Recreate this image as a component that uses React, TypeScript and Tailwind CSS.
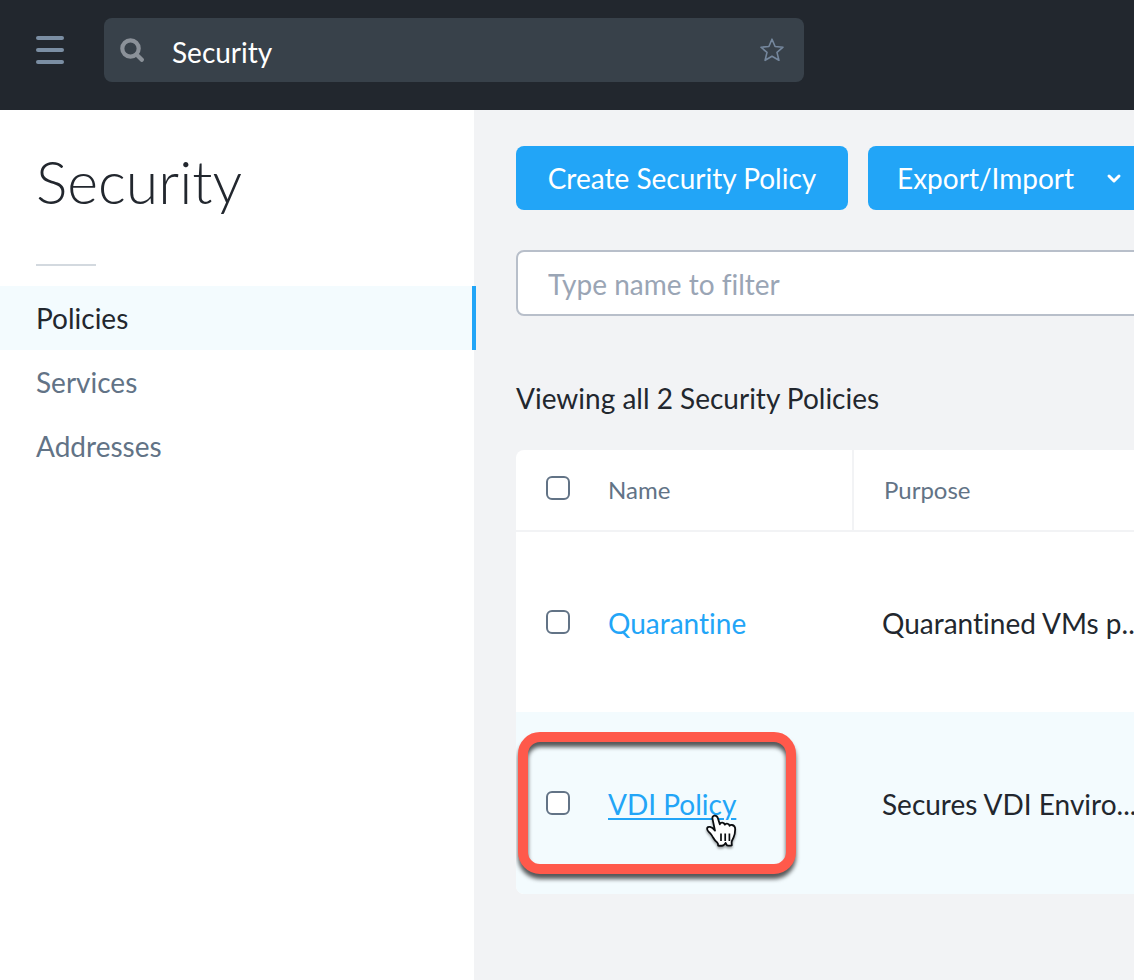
import React from "react";

type Policy = { id: string; name: string; purpose: string; hovered?: boolean };

const policies: Policy[] = [
  { id: "quarantine", name: "Quarantine", purpose: "Quarantined VMs p..." },
  { id: "vdi", name: "VDI Policy", purpose: "Secures VDI Enviro...", hovered: true },
];

const navItems = ["Policies", "Services", "Addresses"];

function Checkbox({ label }: { label: string }) {
  return (
    <input
      type="checkbox"
      aria-label={label}
      className="block size-6 appearance-none rounded-md border-2 border-[#627386] bg-white"
    />
  );
}

function PointerHand() {
  return (
    <svg
      aria-hidden="true"
      viewBox="0 0 34 38"
      className="absolute left-24 top-[26px] h-[38px] w-[34px] drop-shadow-[0_2px_1px_rgba(0,0,0,0.35)]"
    >
      <path
        d="M8.600 6.400C7.900 4.200 8.900 2.800 10.600 2.700c1.700-.1 2.700.8 3.200 2.400l2 6.200c.3-1.100 1.400-1.700 2.600-1.600 1.300.1 2.100.9 2.400 2 .5-.9 1.400-1.300 2.500-1.100 1.300.2 2.100 1 2.300 2.200.5-.7 1.400-1 2.400-.8 2.200.4 3.200 2 3.200 4.300 0 3.600-.6 6-1.800 8.500-.9 1.800-1.700 3.200-1.800 4.300l.2 3.300c-1.600.4-3.300.4-4.700 0-.7-.8-1.100-1.700-1.500-2.500-.7 1-1.400 2-2.500 2.600-1.700.3-3.500.3-5 0 .2-1.400-.2-2.300-1-3.100-1.800-1.500-3.100-3.300-4.200-5.200-.9-1.700-1.800-3-3.100-4.300-1.200-1.200-2.600-2.200-2.700-3.900-.1-1.800 1.400-2.500 3-2.100 1.900.5 3.400 1.900 4.900 3.700z"
        fill="#fff"
        stroke="#0b0d10"
        strokeWidth="1.800"
        strokeLinejoin="round"
      />
      <path d="M17 20.500v7.500M21.200 20.500v7.500M25.400 20.500v7.500" stroke="#0b0d10" strokeWidth="1.700" />
    </svg>
  );
}

export default function App() {
  return (
    <div className="flex min-h-screen flex-col overflow-hidden bg-[#f2f3f5] font-['Lato',sans-serif] text-[28px] leading-8 text-[#22272e] [font-variant-ligatures:none]">
      <header className="flex h-[110px] items-start gap-10 bg-[#22272e] px-9 pt-[18px]">
        <button type="button" aria-label="Menu" className="flex h-16 w-7 flex-col justify-center gap-2">
          <span className="h-1 w-7 rounded-sm bg-[#7b8ea3]" />
          <span className="h-1 w-7 rounded-sm bg-[#7b8ea3]" />
          <span className="h-1 w-7 rounded-sm bg-[#7b8ea3]" />
        </button>
        <div className="flex h-16 w-full max-w-[700px] items-center rounded-lg bg-[#38414a] px-4">
          <svg aria-hidden="true" viewBox="0 0 24 24" className="size-6 shrink-0" fill="none" stroke="#8b9199">
            <circle cx="10.500" cy="10.500" r="8.200" strokeWidth="4.200" />
            <path d="M16.500 16.500l5.300 5.300" strokeWidth="4.200" strokeLinecap="round" />
          </svg>
          <input
            type="text"
            aria-label="Search"
            defaultValue="Security"
            className="ml-7 mt-1 min-w-0 flex-1 bg-transparent text-white outline-none"
          />
          <button type="button" aria-label="Add to favorites" className="shrink-0">
            <svg viewBox="0 0 32 32" className="size-8" fill="none" stroke="#75879d" strokeWidth="1.600" strokeLinejoin="round">
              <path d="M16 5.200l3.100 7.300 7.900.7-6 5.200 1.900 7.900L16 22.200l-6.900 4.100L11 18.400l-6-5.200 7.900-.7z" />
            </svg>
          </button>
        </div>
      </header>

      <div className="flex flex-1">
        <aside className="w-[474px] shrink-0 bg-white">
          <h1 className="px-9 pb-0.5 pt-[38px] text-[59px] font-light leading-[68px]">Security</h1>
          <hr className="mb-5 ml-9 mt-[46px] w-15 border-0 border-t-2 border-[#d3d9df]" />
          <nav>
            {navItems.map((item, index) => (
              <a
                key={item}
                href="#"
                aria-current={index === 0 ? "page" : undefined}
                className={
                  index === 0
                    ? "relative flex h-16 items-center bg-[#f3fbfe] px-9"
                    : "flex h-16 items-center px-9 text-[#627386]"
                }
              >
                {item}
                {index === 0 && <span className="absolute inset-y-0 -right-0.5 w-1 bg-[#22a5f7]" />}
              </a>
            ))}
          </nav>
        </aside>

        <main className="min-w-0 flex-1 overflow-hidden pl-[42px] pt-9">
          <div className="flex gap-5 text-white">
            <button type="button" className="h-16 w-[332px] shrink-0 whitespace-nowrap rounded-lg bg-[#22a5f7]">
              Create Security Policy
            </button>
            <button
              type="button"
              className="flex h-16 w-[284px] shrink-0 items-center justify-between rounded-lg bg-[#22a5f7] pl-[29px] pr-[30px]"
            >
              Export/Import
              <svg aria-hidden="true" viewBox="0 0 16 16" className="size-4" fill="none" stroke="#fff" strokeWidth="3" strokeLinecap="round" strokeLinejoin="round">
                <path d="M3 6l5 5 5-5" />
              </svg>
            </button>
          </div>

          <input
            type="text"
            aria-label="Filter by name"
            placeholder="Type name to filter"
            className="mt-10 block h-[66px] w-[calc(100%+32px)] rounded-lg border-2 border-[#b8bfca] bg-white px-[30px] pt-0.5 outline-none placeholder:text-[#9aa5b5]"
          />

          <p className="mt-[66px]">Viewing all 2 Security Policies</p>

          <table className="mt-9 w-[calc(100%+32px)] table-fixed border-separate border-spacing-0 overflow-hidden rounded-lg bg-white text-left">
            <thead className="text-2xl text-[#627386]">
              <tr className="h-[82px]">
                <th className="w-[92px] border-b-2 border-[#f2f3f5] pb-1 pl-[30px]">
                  <Checkbox label="Select all policies" />
                </th>
                <th className="w-[246px] border-b-2 border-r-2 border-[#f2f3f5] font-normal">Name</th>
                <th className="border-b-2 border-[#f2f3f5] pl-[30px] font-normal">Purpose</th>
              </tr>
            </thead>
            <tbody>
              {policies.map((policy) => (
                <tr key={policy.id} className={policy.hovered ? "h-[182px] bg-[#f3fbfe]" : "h-[180px]"}>
                  <td className="relative pl-[30px]">
                    <Checkbox label={`Select ${policy.name}`} />
                    {policy.hovered && (
                      <span className="pointer-events-none absolute left-0.5 top-5 h-[142px] w-[278px] rounded-[22px] border-10 border-[#ff594b] drop-shadow-[0_5px_2px_rgba(0,0,0,0.65)]" />
                    )}
                  </td>
                  <td className="pt-0.5">
                    <a
                      href="#"
                      className={
                        policy.hovered
                          ? "relative text-[#22a5f7] underline decoration-2 underline-offset-3"
                          : "text-[#22a5f7]"
                      }
                    >
                      {policy.name}
                      {policy.hovered && <PointerHand />}
                    </a>
                  </td>
                  <td className="overflow-hidden whitespace-nowrap pl-7 pt-0.5">{policy.purpose}</td>
                </tr>
              ))}
            </tbody>
          </table>
        </main>
      </div>
    </div>
  );
}
